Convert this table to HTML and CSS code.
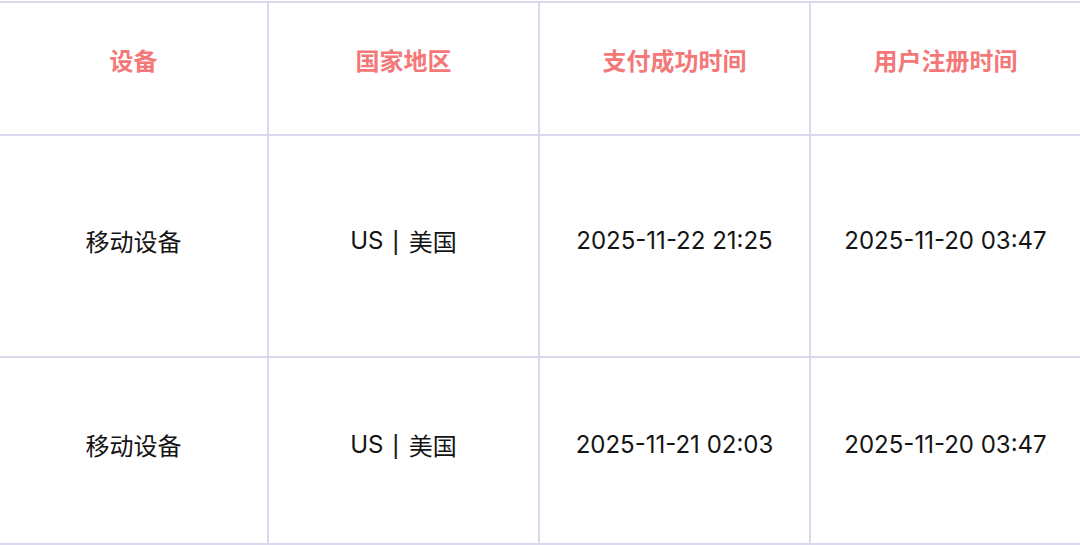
FILE: index.html
```html
<!DOCTYPE html>
<html lang="zh-CN">
<head>
<meta charset="utf-8">
<link rel="stylesheet" href="styles.css">
</head>
<body>
<div class="table">
  <div class="cell head">设备</div>
  <div class="cell head">国家地区</div>
  <div class="cell head">支付成功时间</div>
  <div class="cell head">用户注册时间</div>

  <div class="cell row1">移动设备</div>
  <div class="cell row1">US<span class="sep">|</span>美国</div>
  <div class="cell row1">2025-11-22 21:25</div>
  <div class="cell row1">2025-11-20 03:47</div>

  <div class="cell row2">移动设备</div>
  <div class="cell row2">US<span class="sep">|</span>美国</div>
  <div class="cell row2">2025-11-21 02:03</div>
  <div class="cell row2">2025-11-20 03:47</div>
</div>
</body>
</html>
```
FILE: styles.css
```css
html, body {
  margin: 0;
  padding: 0;
  background: #ffffff;
}
body {
  width: 1080px;
  height: 545px;
  overflow: hidden;
  font-family: "Inter", "Noto Sans CJK SC", sans-serif;
}
.table {
  margin-top: 1px;
  display: grid;
  grid-template-columns: 267px 269px 269px 1fr;
  grid-template-rows: 131px 220px 185px;
  gap: 2px;
  padding: 2px 0;
  background: #dbd8ee;
}
.cell {
  background: #ffffff;
  display: flex;
  align-items: center;
  justify-content: center;
  font-size: 24px;
  color: #141414;
  padding-bottom: 12px;
  box-sizing: border-box;
  white-space: nowrap;
}
.head {
  color: #f47878;
  font-weight: 700;
  padding-bottom: 18px;
}
.sep {
  margin: 0 9px 0 8px;
  font-family: "DejaVu Sans", sans-serif;
  font-size: 25px;
  color: #222222;
}
```
